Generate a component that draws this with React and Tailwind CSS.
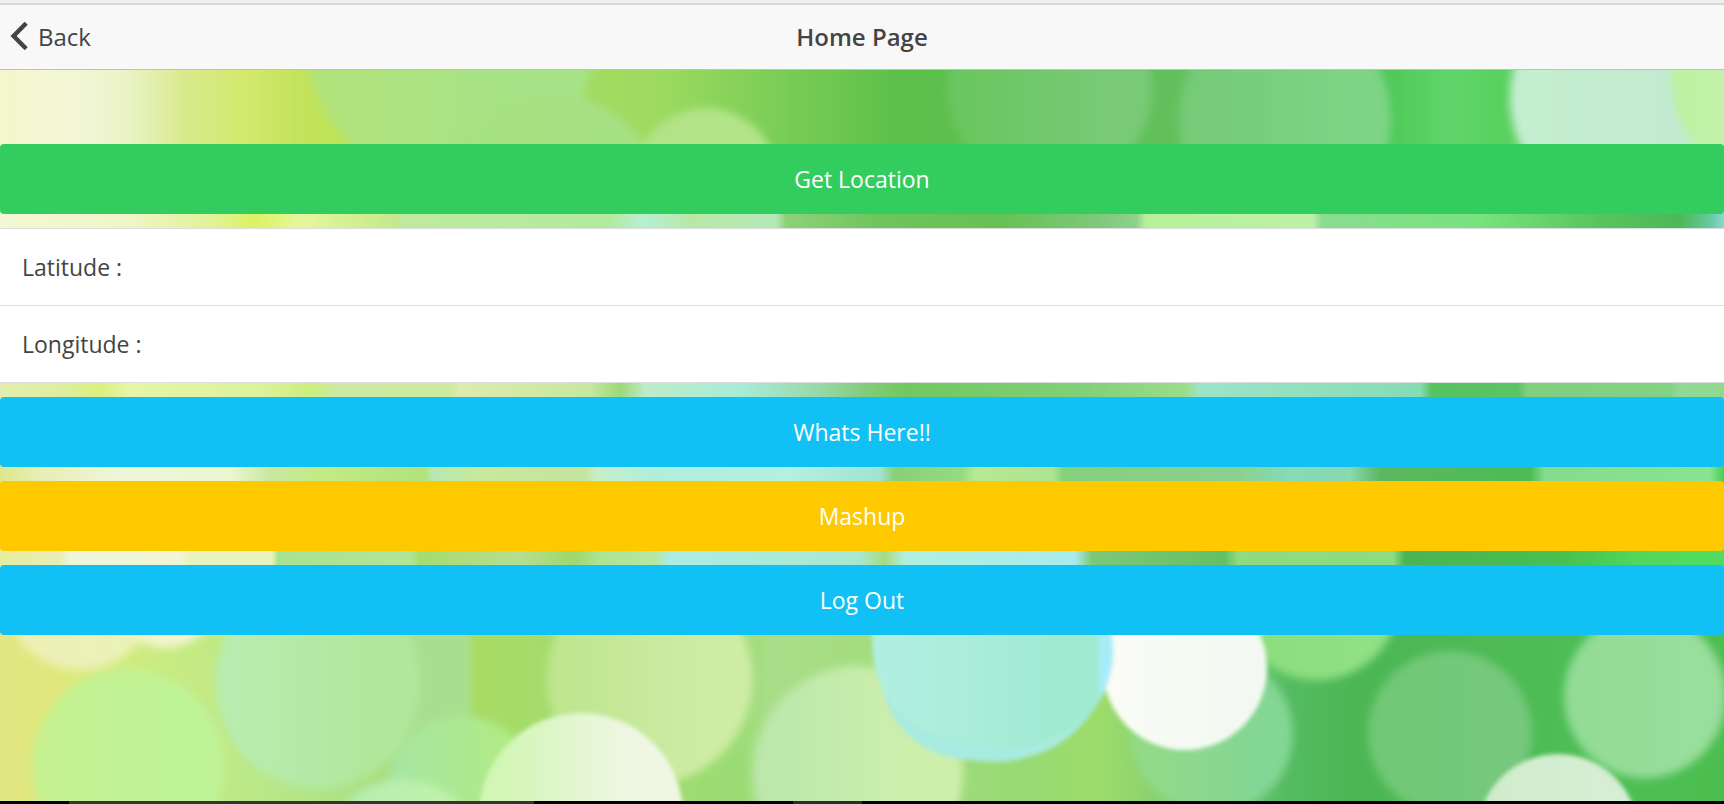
import React from "react";

const BANDS = [
  {
    id: "b0", y: -20, h: 135,
    stops: [[0, "#f4f7cc"], [80, "#f2f6d6"], [130, "#eaf3c4"], [185, "#d9ea8c"], [240, "#d4e970"], [300, "#c3e35c"], [400, "#b8e250"], [520, "#a5dc62"], [650, "#9fdb60"], [770, "#7dce57"], [900, "#5cc04a"], [1160, "#62c05c"], [1390, "#4fc95a"], [1450, "#62d56a"], [1500, "#58d160"], [1724, "#a9dc90"]],
  },
  {
    id: "b1", y: 115, h: 130,
    stops: [[0, "#f5f7d4"], [130, "#eff5c8"], [215, "#e2f194"], [255, "#dcf163"], [300, "#e6f79c"], [395, "#c4e98c"], [405, "#bfe9a0"], [610, "#b2eaa0"], [645, "#b6f0d4"], [690, "#b8e8a8"], [776, "#b4e8b8"], [786, "#8ed178"], [880, "#6fc45c"], [1000, "#66c152"], [1100, "#80c87c"], [1136, "#8ed08c"], [1146, "#b8f09a"], [1313, "#bcf0a8"], [1322, "#8adc90"], [1480, "#78e27e"], [1600, "#58c460"], [1680, "#4cb956"], [1710, "#66c8a0"], [1724, "#8ad8d0"]],
  },
  {
    id: "b2", y: 245, h: 118,
    stops: [[0, "#e4edb0"], [60, "#ddeea0"], [100, "#dcf07e"], [130, "#e6f5a8"], [260, "#dcf39c"], [310, "#cbee7e"], [340, "#cdeaa4"], [450, "#cceaa0"], [460, "#dcecae"], [590, "#c6e8a0"], [620, "#9cd878"], [645, "#bdecc8"], [740, "#a8ecd8"], [820, "#98d8a8"], [860, "#86cc80"], [905, "#72c860"], [1080, "#80d078"], [1185, "#9cdc8c"], [1200, "#9ce4c8"], [1420, "#86dcb4"], [1432, "#56c260"], [1518, "#5cc464"], [1528, "#80d080"], [1670, "#84d284"], [1680, "#92d896"], [1724, "#90d890"]],
  },
  {
    id: "b3", y: 363, h: 87,
    stops: [[0, "#dce88c"], [40, "#e6efb4"], [120, "#eff6d8"], [230, "#ecf6d0"], [270, "#c8e8a0"], [320, "#c4ea86"], [425, "#b2e27c"], [432, "#b8e8b0"], [480, "#c8e89c"], [585, "#c4e4a0"], [597, "#c8eec8"], [650, "#b2eedc"], [790, "#b4f0e0"], [880, "#a0e4d0"], [894, "#88d078"], [962, "#96da80"], [974, "#b8e894"], [1052, "#b0e490"], [1064, "#84d07c"], [1240, "#8cd090"], [1290, "#84dcb8"], [1350, "#88d8b0"], [1380, "#5cb860"], [1530, "#4cbc54"], [1545, "#84dc8c"], [1710, "#88e490"], [1724, "#48cc54"]],
  },
  {
    id: "b4", y: 450, h: 80,
    stops: [[0, "#e6ec9e"], [60, "#e8eeb4"], [70, "#eff5dc"], [180, "#f0f6d4"], [190, "#e8f2bc"], [272, "#e8f2bc"], [278, "#a8e290"], [410, "#b0e698"], [420, "#a6dc6e"], [520, "#b6de90"], [575, "#9cd86c"], [600, "#ace494"], [655, "#b4e8a0"], [670, "#acece4"], [860, "#a8e8d0"], [885, "#a8da80"], [905, "#b0f0e0"], [1075, "#a8ecec"], [1092, "#7cc878"], [1225, "#64c064"], [1238, "#90da80"], [1393, "#8cdc80"], [1405, "#4cb454"], [1560, "#46c050"], [1640, "#50d85c"], [1724, "#50dc60"]],
  },
  {
    id: "b5", y: 530, h: 220,
    stops: [[0, "#e2e683"], [60, "#e0e87c"], [150, "#cbeb80"], [260, "#b9e888"], [400, "#a8dd80"], [412, "#a8de90"], [466, "#a8de90"], [476, "#a8db64"], [550, "#a4dc6c"], [740, "#9cdb74"], [770, "#a8de88"], [870, "#a4dc80"], [1020, "#98da74"], [1100, "#9cdc6a"], [1160, "#88d070"], [1290, "#54bb62"], [1350, "#4cb654"], [1600, "#4ebe54"], [1724, "#4cbe50"]],
  },
];

/* cx, cy, rx, ry, edge colour on the left, edge colour on the right */
const LIGHTS = [
  [450, -40, 146, 156, "#b0e37c", "#a6e288"],
  [545, 130, 115, 108, "#a8e280", "#a6e084"],
  [706, 116, 74, 78, "#b3e388", "#b2e488"],
  [1050, 20, 102, 98, "#6ac660", "#78ca76"],
  [1285, 50, 106, 114, "#76ca78", "#7cd484"],
  [1614, 28, 104, 110, "#c4eed0", "#c2ead0"],
  [1714, -6, 44, 90, "#bcf2a0", "#c6f2b0"],
];

const LOWER_LIGHTS = [
  [80, 524, 76, 76, "#ecf0b4", "#eaf2b8"],
  [165, 512, 60, 66, "#eef4c4", "#f2f6d0"],
  [128, 697, 96, 98, "#c6f292", "#bff496"],
  [318, 612, 102, 107, "#b8ecb0", "#b0e79c"],
  [462, 718, 74, 72, "#a8e6a0", "#b0ea88"],
  [402, 770, 70, 60, "#b4ecb4", "#c0f2ac"],
  [650, 608, 103, 106, "#bfe690", "#cdeca4"],
  [858, 703, 105, 107, "#bce8ac", "#cdefac"],
  [1212, 664, 81, 80, "#92da88", "#84d694"],
  [1317, 530, 82, 80, "#8cde7c", "#90e084"],
  [1450, 663, 82, 82, "#72c876", "#74c87c"],
  [1645, 626, 81, 82, "#92dc96", "#98de9c"],
];

const SHARP_LIGHTS = [
  [581, 745, 102, 102, "#d2f6b4", "#eff7e4"],
  [994, 570, 122, 122, "#b0efe0", "#a0ead2"],
  [1185, 598, 82, 82, "#fafcf6", "#f3f9f2"],
  [1558, 763, 80, 79, "#cfeccb", "#d6eed4"],
];

function Light({ id, light }) {
  const [cx, cy, rx, ry, from, to] = light;
  return (
    <>
      <linearGradient id={id}>
        <stop offset="0.1" stopColor={from} />
        <stop offset="0.75" stopColor={to} />
      </linearGradient>
      <ellipse cx={cx} cy={cy} rx={rx} ry={ry} fill={`url(#${id})`} />
    </>
  );
}

function Backdrop() {
  return (
    <svg
      aria-hidden="true"
      viewBox="0 0 1724 731"
      preserveAspectRatio="none"
      className="absolute inset-0 h-full w-full"
    >
      <defs>
        <filter id="soft" x="-5%" y="-5%" width="110%" height="110%">
          <feGaussianBlur stdDeviation="4.5" />
        </filter>
        <filter id="crisp" x="-5%" y="-5%" width="110%" height="110%">
          <feGaussianBlur stdDeviation="2" />
        </filter>
        {BANDS.map((band) => (
          <linearGradient key={band.id} id={band.id} gradientUnits="userSpaceOnUse" x1="0" x2="1724" y1="0" y2="0">
            {band.stops.map(([x, color]) => (
              <stop key={x} offset={x / 1724} stopColor={color} />
            ))}
          </linearGradient>
        ))}
      </defs>
      {BANDS.map((band) => (
        <rect key={band.id} x="0" y={band.y} width="1724" height={band.h} fill={`url(#${band.id})`} />
      ))}
      <svg x="0" y="0" width="1724" height="110" viewBox="0 0 1724 110">
        <g filter="url(#soft)">
          {LIGHTS.map((light, i) => (
            <Light key={i} id={`u${i}`} light={light} />
          ))}
        </g>
      </svg>
      <svg x="0" y="530" width="1724" height="201" viewBox="0 530 1724 201">
        <g filter="url(#soft)">
          {LOWER_LIGHTS.map((light, i) => (
            <Light key={i} id={`l${i}`} light={light} />
          ))}
        </g>
        <g filter="url(#crisp)">
          {SHARP_LIGHTS.map((light, i) => (
            <Light key={i} id={`s${i}`} light={light} />
          ))}
          <path d="M1110 560 Q1120 590 1101 628 Q1096 600 1100 560Z" fill="#a6ecf8" />
          <path d="M882 620 Q905 690 975 690 Q1050 696 1085 650 Q1040 682 990 678 Q915 672 882 620Z" fill="#a8ebe0" />
        </g>
      </svg>
    </svg>
  );
}

const TONES = {
  balanced: "bg-[#33cd5f]",
  calm: "bg-[#11c1f5]",
  energized: "bg-[#ffc900]",
};

function BlockButton({ tone, children }) {
  return (
    <button
      type="button"
      className={`flex h-[70px] w-full items-center justify-center rounded text-[23px] leading-8 text-white ${TONES[tone]}`}
    >
      {children}
    </button>
  );
}

export default function App() {
  return (
    <div className="flex min-h-screen flex-col bg-[#f8f8f8] font-['Open_Sans','Noto_Sans',sans-serif] text-[#444444]">
      <header className="border-t-3 border-b border-t-[#efefef] border-b-[#c0c0c0] bg-[#f8f8f8]">
        <div className="grid h-[66px] grid-cols-[1fr_auto_1fr] items-center border-t-2 border-[#d6d6d6]">
          <button type="button" className="flex items-center gap-2 justify-self-start pl-[10px] text-[24px] leading-8">
            <svg aria-hidden="true" viewBox="0 0 20 30" className="h-[30px] w-5" fill="none" stroke="#444444" strokeWidth="4.4">
              <path d="M16.2 1.2 3.6 14 16.2 26.8" />
            </svg>
            Back
          </button>
          <h1 className="text-[24px] leading-8 font-semibold">Home Page</h1>
        </div>
      </header>

      <main className="relative flex-1 overflow-hidden">
        <Backdrop />
        <div className="relative flex flex-col gap-[14px] pt-[74px] pb-8">
          <BlockButton tone="balanced">Get Location</BlockButton>
          <ul className="divide-y divide-[#dddddd] border-y border-[#dddddd] bg-white">
            <li className="px-[22px] py-[22px] text-[23px] leading-8">Latitude :</li>
            <li className="px-[22px] py-[22px] text-[23px] leading-8">Longitude :</li>
          </ul>
          <BlockButton tone="calm">Whats Here!!</BlockButton>
          <BlockButton tone="energized">Mashup</BlockButton>
          <BlockButton tone="calm">Log Out</BlockButton>
        </div>
      </main>

      <footer className="flex h-[3px] bg-black">
        <div className="ml-[4%] w-[27%] bg-[#333333]" />
        <div className="ml-[15%] w-[4%] bg-[#2c2c2c]" />
      </footer>
    </div>
  );
}
